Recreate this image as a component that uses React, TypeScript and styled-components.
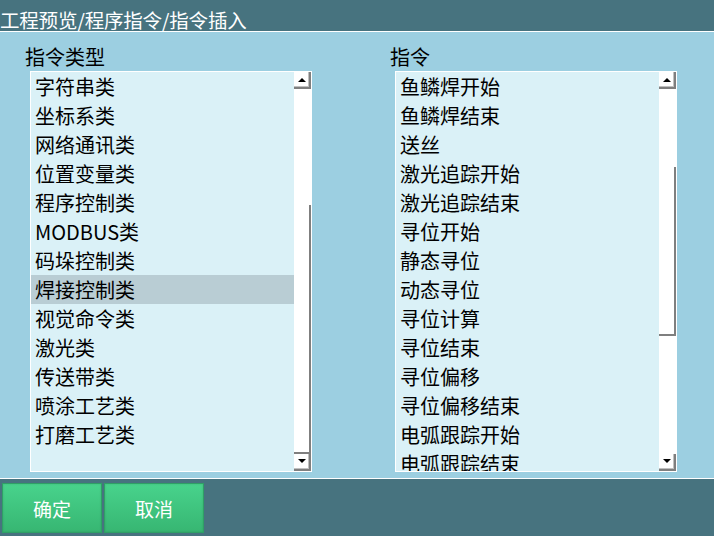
import styled, {createGlobalStyle} from "styled-components";

const GlobalStyle = createGlobalStyle`
    html, body {
        margin: 0;
        padding: 0;
        width: 714px;
        height: 536px;
        overflow: hidden;
        font-family: "Noto Sans CJK SC", "Noto Sans", sans-serif;
    }
`

const Page = styled.div`
    width: 714px;
    height: 536px;
    display: flex;
    flex-direction: column;
    background-color: #47737f;
`

const TitleBar = styled.div`
    height: 32px;
    box-sizing: border-box;
    padding-top: 9px;
    border-bottom: 1px solid #ffffff;
    color: #ffffff;
    font-size: 19.5px;
    line-height: 22px;
    white-space: nowrap;
    letter-spacing: -0.2px;
`

const MainArea = styled.div`
    height: 447px;
    box-sizing: border-box;
    background-color: #9ccfe1;
    border-bottom: 1px solid #ffffff;
    display: grid;
    grid-template-columns: 282px 282px;
    column-gap: 83px;
    padding: 12px 0 0 25px;
`

const Column = styled.div`
    display: flex;
    flex-direction: column;
`

const ColumnTitle = styled.div`
    font-size: 20px;
    line-height: 26px;
    height: 27px;
    color: #000000;
`

const ListBox = styled.div`
    margin-left: 5px;
    height: 401px;
    width: 282px;
    box-sizing: border-box;
    border: 1px solid #ffffff;
    display: flex;
    overflow: hidden;
`

const ListItems = styled.div`
    flex: 1;
    background-color: #daf1f7;
    overflow: hidden;
`

const ListItem = styled.div<{ $selected?: boolean }>`
    height: 29px;
    line-height: 29px;
    padding-left: 4px;
    font-size: 20px;
    color: #000000;
    white-space: nowrap;
    background-color: ${p => p.$selected ? "#b9cdd4" : "transparent"};
`

const ScrollBar = styled.div`
    width: 17px;
    background-color: #ffffff;
    display: flex;
    flex-direction: column;
`

const ScrollButton = styled.div`
    height: 17px;
    box-sizing: border-box;
    border-right: 2px solid #7f7f7f;
    border-bottom: 2px solid #7f7f7f;
    box-shadow: inset -1px -1px 0 #c0c0c0;
    display: flex;
    align-items: center;
    justify-content: center;
`

const Arrow = styled.div<{ $down?: boolean }>`
    width: 0;
    height: 0;
    border-left: 4px solid transparent;
    border-right: 4px solid transparent;
    ${p => p.$down
        ? "border-top: 4px solid #000000; margin-bottom: 2px;"
        : "border-bottom: 4px solid #000000; margin-top: 1px;"}
`

const Track = styled.div`
    flex: 1;
    display: flex;
    flex-direction: column;
`

const Thumb = styled.div<{ $top: number; $size: number }>`
    margin-top: ${p => p.$top}px;
    height: ${p => p.$size}px;
    box-sizing: border-box;
    border-right: 2px solid #7f7f7f;
    border-bottom: 2px solid #7f7f7f;
`

const BottomBar = styled.div`
    flex: 1;
    display: flex;
    gap: 2px;
    padding: 4px 0 0 2px;
`

const ActionButton = styled.button`
    width: 100px;
    height: 50px;
    border: 1px solid #2f9f66;
    background: linear-gradient(#48d38c, #37b672);
    color: #ffffff;
    font-family: "Noto Sans CJK SC", "Noto Sans", sans-serif;
    font-size: 19px;
    padding: 0;
    box-shadow: inset 0 0 2px rgba(0, 0, 0, 0.15);
`

const instructionTypes = [
    "字符串类", "坐标系类", "网络通讯类", "位置变量类", "程序控制类", "MODBUS类",
    "码垛控制类", "焊接控制类", "视觉命令类", "激光类", "传送带类", "喷涂工艺类", "打磨工艺类",
]

const instructions = [
    "鱼鳞焊开始", "鱼鳞焊结束", "送丝", "激光追踪开始", "激光追踪结束", "寻位开始", "静态寻位",
    "动态寻位", "寻位计算", "寻位结束", "寻位偏移", "寻位偏移结束", "电弧跟踪开始", "电弧跟踪结束",
]

function ScrollColumn({thumbTop, thumbSize}: { thumbTop: number; thumbSize: number }) {
    return (
        <ScrollBar>
            <ScrollButton><Arrow/></ScrollButton>
            <Track>
                <Thumb $top={thumbTop} $size={thumbSize}/>
            </Track>
            <ScrollButton><Arrow $down/></ScrollButton>
        </ScrollBar>
    )
}

export default function App() {
    return (
        <>
            <GlobalStyle/>
            <Page>
                <TitleBar>工程预览/程序指令/指令插入</TitleBar>
                <MainArea>
                    <Column>
                        <ColumnTitle>指令类型</ColumnTitle>
                        <ListBox>
                            <ListItems>
                                {instructionTypes.map(t => (
                                    <ListItem key={t} $selected={t === "焊接控制类"}>{t}</ListItem>
                                ))}
                            </ListItems>
                            <ScrollColumn thumbTop={116} thumbSize={249}/>
                        </ListBox>
                    </Column>
                    <Column>
                        <ColumnTitle>指令</ColumnTitle>
                        <ListBox>
                            <ListItems>
                                {instructions.map(t => <ListItem key={t}>{t}</ListItem>)}
                            </ListItems>
                            <ScrollColumn thumbTop={78} thumbSize={169}/>
                        </ListBox>
                    </Column>
                </MainArea>
                <BottomBar>
                    <ActionButton>确定</ActionButton>
                    <ActionButton>取消</ActionButton>
                </BottomBar>
            </Page>
        </>
    )
}
